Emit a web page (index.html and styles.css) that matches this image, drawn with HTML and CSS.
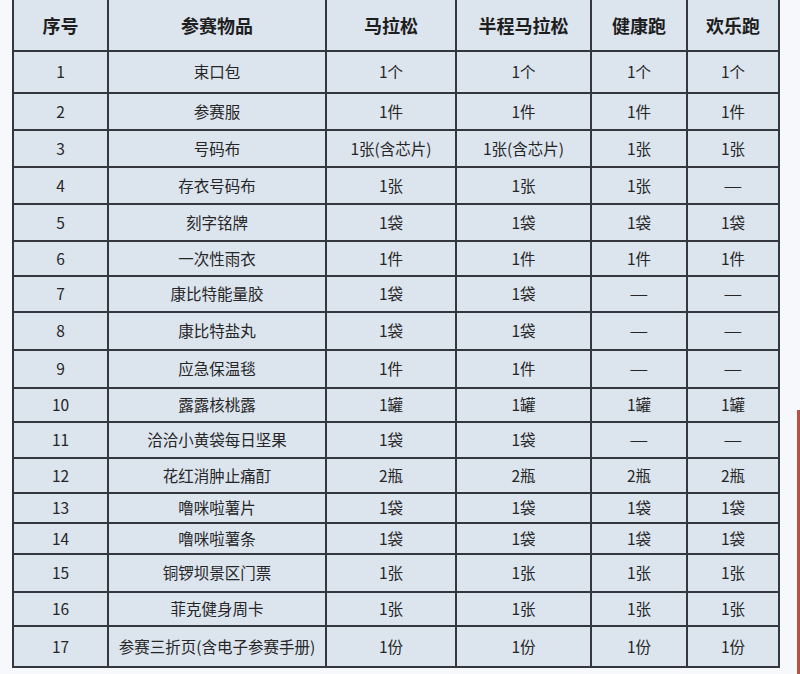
FILE: index.html
```html
<!DOCTYPE html>
<html lang="zh">
<head>
<meta charset="utf-8">
<title>参赛物品</title>
<link rel="stylesheet" href="styles.css">
</head>
<body>
<div class="page">
  <table class="kit">
    <colgroup>
      <col class="c1"><col class="c2"><col class="c3"><col class="c4"><col class="c5"><col class="c6">
    </colgroup>
    <thead>
      <tr class="hd"><th>序号</th><th>参赛物品</th><th>马拉松</th><th>半程马拉松</th><th>健康跑</th><th>欢乐跑</th></tr>
    </thead>
    <tbody>
      <tr class="h42"><td>1</td><td>束口包</td><td>1个</td><td>1个</td><td>1个</td><td>1个</td></tr>
      <tr class="h37"><td>2</td><td>参赛服</td><td>1件</td><td>1件</td><td>1件</td><td>1件</td></tr>
      <tr class="h37"><td>3</td><td>号码布</td><td>1张(含芯片)</td><td>1张(含芯片)</td><td>1张</td><td>1张</td></tr>
      <tr class="h37"><td>4</td><td>存衣号码布</td><td>1张</td><td>1张</td><td>1张</td><td><span class="dash">—</span></td></tr>
      <tr class="h37"><td>5</td><td>刻字铭牌</td><td>1袋</td><td>1袋</td><td>1袋</td><td>1袋</td></tr>
      <tr class="h35"><td>6</td><td>一次性雨衣</td><td>1件</td><td>1件</td><td>1件</td><td>1件</td></tr>
      <tr class="h36"><td>7</td><td>康比特能量胶</td><td>1袋</td><td>1袋</td><td><span class="dash">—</span></td><td><span class="dash">—</span></td></tr>
      <tr class="h38"><td>8</td><td>康比特盐丸</td><td>1袋</td><td>1袋</td><td><span class="dash">—</span></td><td><span class="dash">—</span></td></tr>
      <tr class="h38"><td>9</td><td>应急保温毯</td><td>1件</td><td>1件</td><td><span class="dash">—</span></td><td><span class="dash">—</span></td></tr>
      <tr class="h34"><td>10</td><td>露露核桃露</td><td>1罐</td><td>1罐</td><td>1罐</td><td>1罐</td></tr>
      <tr class="h36"><td>11</td><td>洽洽小黄袋每日坚果</td><td>1袋</td><td>1袋</td><td><span class="dash">—</span></td><td><span class="dash">—</span></td></tr>
      <tr class="h35"><td>12</td><td>花红消肿止痛酊</td><td>2瓶</td><td>2瓶</td><td>2瓶</td><td>2瓶</td></tr>
      <tr class="h30"><td>13</td><td>噜咪啦薯片</td><td>1袋</td><td>1袋</td><td>1袋</td><td>1袋</td></tr>
      <tr class="h31"><td>14</td><td>噜咪啦薯条</td><td>1袋</td><td>1袋</td><td>1袋</td><td>1袋</td></tr>
      <tr class="h38"><td>15</td><td>铜锣坝景区门票</td><td>1张</td><td>1张</td><td>1张</td><td>1张</td></tr>
      <tr class="h34"><td>16</td><td>菲克健身周卡</td><td>1张</td><td>1张</td><td>1张</td><td>1张</td></tr>
      <tr class="h41"><td>17</td><td>参赛三折页(含电子参赛手册)</td><td>1份</td><td>1份</td><td>1份</td><td>1份</td></tr>
    </tbody>
  </table>
  <div class="edge"></div>
</div>
</body>
</html>
```

FILE: styles.css
```css
html, body {
  margin: 0;
  padding: 0;
  background: #f6f8fb;
}
.page {
  position: relative;
  width: 800px;
  height: 674px;
  overflow: hidden;
  padding-left: 12px;
  box-sizing: border-box;
  font-family: "Noto Sans CJK SC", "Noto Sans", sans-serif;
}
.kit {
  width: 767px;
  table-layout: fixed;
  border-collapse: collapse;
  background: #dce4ee;
  color: #262626;
}
.c1 { width: 95px; }
.c2 { width: 218px; }
.c3 { width: 130px; }
.c4 { width: 135px; }
.c5 { width: 96px; }
.c6 { width: 92px; }
.kit th, .kit td {
  border: 2px solid #34373d;
  padding: 0;
  text-align: center;
  vertical-align: middle;
  overflow: hidden;
  white-space: nowrap;
}
.kit th {
  border-top: none;
  height: 50px;
  font-size: 18px;
  font-weight: 700;
  color: #1e1e1e;
}
.kit td {
  font-size: 15.5px;
  line-height: 1;
}
.dash {
  display: inline-block;
  transform: scaleX(1.35);
}
.h42 td { height: 40px; }
.h41 td { height: 39px; }
.h38 td { height: 36px; }
.h37 td { height: 35px; }
.h36 td { height: 34px; }
.h35 td { height: 33px; }
.h34 td { height: 32px; }
.h31 td { height: 29px; }
.h30 td { height: 28px; }
.edge {
  position: absolute;
  right: 0;
  top: 410px;
  width: 3px;
  height: 264px;
  background: #b9533f;
}
```
